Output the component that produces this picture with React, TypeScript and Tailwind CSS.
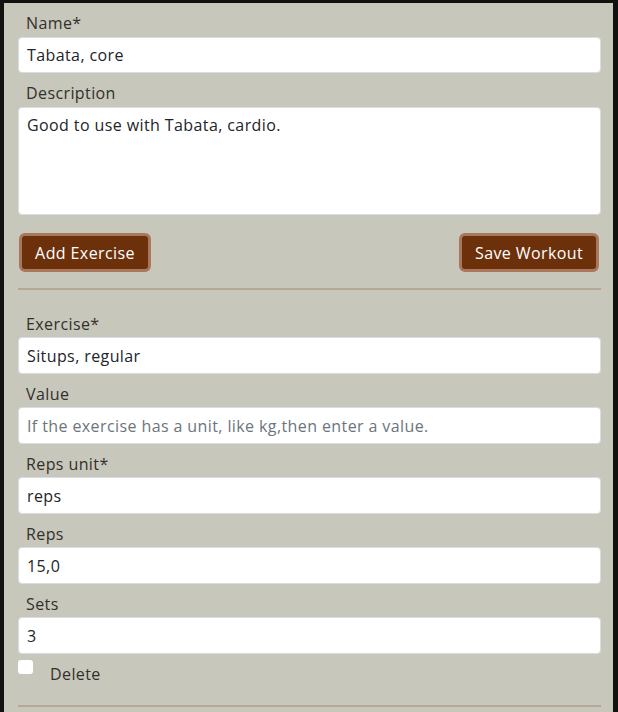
import React from 'react';

const font = { fontFamily: '"Open Sans", "Liberation Sans", sans-serif' };

function Field({ label, value, placeholder }: { label: string; value?: string; placeholder?: string }) {
  return (
    <div className="flex flex-col">
      <label className="h-6 pl-2 text-[16px] leading-6 tracking-[0.4px] text-[#33302c]">{label}</label>
      <input
        readOnly
        value={value ?? ''}
        placeholder={placeholder}
        className="mt-[1px] h-[37px] w-full rounded bg-white border border-[#d9dde2] px-[8px] text-[16px] tracking-[0.4px] text-[#212529] placeholder:text-[#6c757d] outline-none"
      />
    </div>
  );
}

export default function App() {
  return (
    <div className="w-[618px] h-[712px] overflow-hidden bg-[#111110] pt-[3px] pl-[4px] pr-[5px]" style={font}>
      <div className="h-full bg-[#c8c7bb] pl-[14px] pr-[12px] pt-[8px]">
        {/* Workout */}
        <div className="flex flex-col gap-2">
          <div className="flex flex-col">
            <label className="h-6 pl-2 text-[16px] leading-6 tracking-[0.4px] text-[#33302c]">Name*</label>
            <input
              readOnly
              value="Tabata, core"
              className="mt-[2px] h-[36px] w-full rounded bg-white border border-[#d9dde2] px-[8px] text-[16px] tracking-[0.4px] text-[#212529] outline-none"
            />
          </div>
          <div className="flex flex-col">
            <label className="h-6 pl-2 text-[16px] leading-6 tracking-[0.4px] text-[#33302c]">Description</label>
            <textarea
              readOnly
              value="Good to use with Tabata, cardio."
              className="mt-[2px] h-[108px] w-full resize-none rounded bg-white border border-[#d9dde2] px-[8px] py-[5px] text-[16px] leading-6 tracking-[0.4px] text-[#212529] outline-none"
            />
          </div>
        </div>

        <div className="mt-[18px] flex justify-between pl-[1px] pr-[2px]">
          <button className="h-[39px] w-[132px] rounded-md border-[3px] border-[#a9775b] bg-[#6c300b] text-[16px] tracking-[0.4px] text-white">
            Add Exercise
          </button>
          <button className="h-[39px] w-[140px] rounded-md border-[3px] border-[#a9775b] bg-[#6c300b] text-[16px] tracking-[0.4px] text-white">
            Save Workout
          </button>
        </div>

        <div className="mt-[16px] h-[2px] bg-[#b6a696]" />

        {/* Exercise */}
        <div className="mt-[22px] flex flex-col gap-2">
          <Field label="Exercise*" value="Situps, regular" />
          <Field label="Value" placeholder="If the exercise has a unit, like kg,then enter a value." />
          <Field label="Reps unit*" value="reps" />
          <Field label="Reps" value="15,0" />
          <Field label="Sets" value="3" />
        </div>

        <div className="mt-[6px] flex items-start">
          <span className="h-[14px] w-[15px] rounded-[3px] bg-white" />
          <span className="ml-[17px] mt-[2px] text-[16px] leading-6 tracking-[0.4px] text-[#33302c]">Delete</span>
        </div>

        <div className="mt-[19px] h-[2px] bg-[#b6a696]" />
      </div>
    </div>
  );
}
